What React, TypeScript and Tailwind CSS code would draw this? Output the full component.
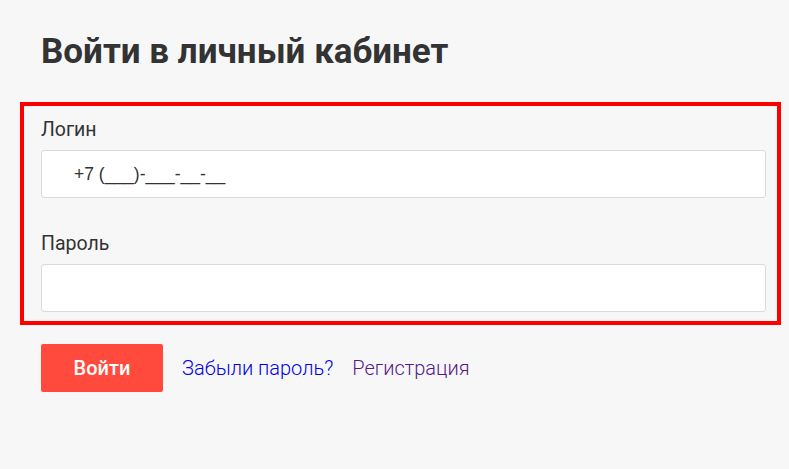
import React from "react";

export default function App() {
  return (
    <div className="min-h-screen w-full bg-[#f7f7f7] pl-[20px] pt-[24px] font-['Roboto',sans-serif] text-[#333333]">
      <h1 className="ml-[21px] text-[35px] font-bold leading-[56px] text-[#333333]">
        Войти в личный кабинет
      </h1>
      <div className="mt-[22px] w-[761px] border-4 border-[#ff0000] pb-[9px] pl-[17px] pt-[10px]">
        <label className="block text-[19.5px] leading-[27px]">Логин</label>
        <div className="mt-[7px] flex h-[48px] w-[725px] items-center rounded-[3px] border border-[#dadada] bg-white pl-[32px] font-['Liberation_Sans',Arial,sans-serif] text-[17.5px] text-[#333333]">
          +7 (___)-___-__-__
        </div>
        <label className="mt-[32px] block text-[19.5px] leading-[27px]">Пароль</label>
        <div className="mt-[7px] h-[48px] w-[725px] rounded-[3px] border border-[#dadada] bg-white" />
      </div>
      <div className="ml-[21px] mt-[19px] flex items-center">
        <button className="flex h-[48px] w-[122px] items-center justify-center rounded-[2px] bg-[#ff4a3d] text-[20px] font-medium text-white">
          Войти
        </button>
        <a className="ml-[19px] text-[20px] font-light text-[#0000ee]">Забыли пароль?</a>
        <a className="ml-[19px] text-[20px] font-light text-[#551a8b]">Регистрация</a>
      </div>
    </div>
  );
}
